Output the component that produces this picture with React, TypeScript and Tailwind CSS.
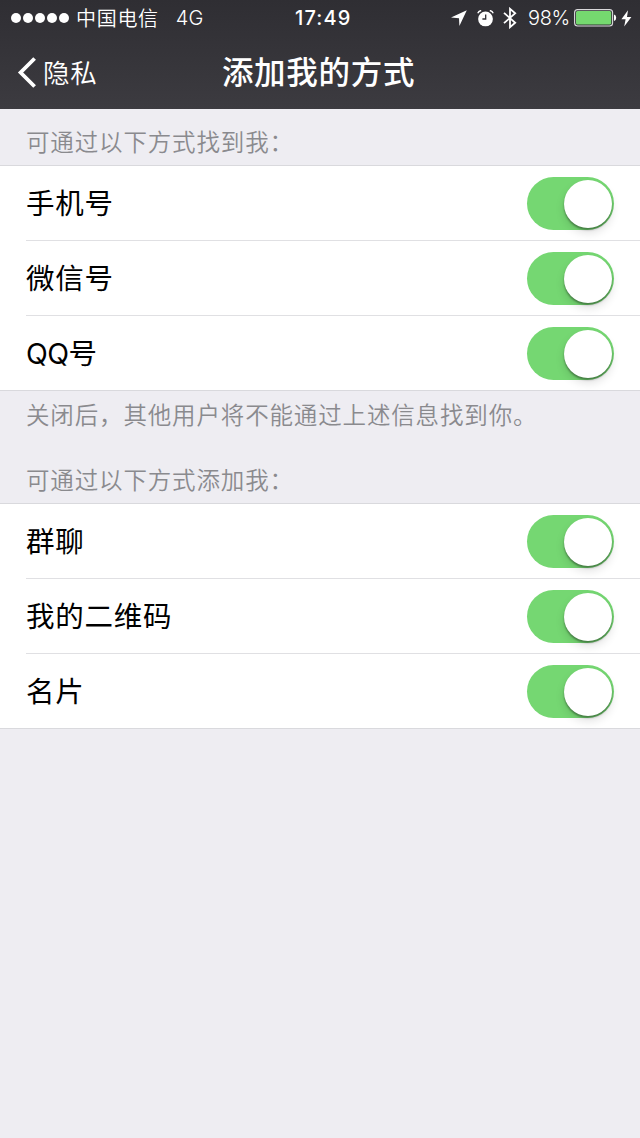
import { useState } from "react";

type Item = { id: string; label: string; latin?: boolean };

const findItems: Item[] = [
  { id: "phone", label: "手机号" },
  { id: "wechat", label: "微信号" },
  { id: "qq", label: "QQ号", latin: true },
];

const addItems: Item[] = [
  { id: "group", label: "群聊" },
  { id: "qrcode", label: "我的二维码" },
  { id: "card", label: "名片" },
];

function SignalDots() {
  return (
    <div className="flex gap-[2px]">
      {Array.from({ length: 5 }).map((_, i) => (
        <span key={i} className="size-[10px] rounded-full bg-white" />
      ))}
    </div>
  );
}

function LocationIcon() {
  return (
    <svg width="16" height="16" viewBox="0 0 16 16" fill="#fff">
      <path d="M15.8 0.3 0 7.6 8 8.2 8.4 16Z" />
    </svg>
  );
}

function AlarmIcon() {
  return (
    <svg width="17" height="17" viewBox="0 0 17 17" fill="none">
      <circle cx="8.5" cy="8.9" r="7.4" fill="#fff" />
      <path d="M0.8 3.2Q1.8 1 4.2 0.5M16.2 3.2Q15.2 1 12.8 0.5" stroke="#fff" strokeWidth="1.4" />
      <path d="M8.7 4.4V9H5.4" stroke="#302f34" strokeWidth="1.3" />
    </svg>
  );
}

function BluetoothIcon() {
  return (
    <svg width="14" height="22" viewBox="0 0 14 22" fill="none" stroke="#fff" strokeWidth="1.8">
      <path d="M1 5.8 12.2 15.8 7 20.2V1.8L12.2 6.2 1 16.2" />
    </svg>
  );
}

function BatteryIcon() {
  return (
    <svg width="43" height="18" viewBox="0 0 43 18" fill="none">
      <rect x="0.6" y="0.6" width="38" height="16.4" rx="3" stroke="#d9d8db" strokeWidth="1.1" />
      <rect x="2" y="2" width="35.2" height="13.6" rx="1.6" fill="#75d96f" />
      <path d="M40 5.6Q42.2 6.2 42.2 8.8T40 12Z" fill="#fff" />
    </svg>
  );
}

function BoltIcon() {
  return (
    <svg width="11" height="17" viewBox="0 0 11 17" fill="#fff">
      <path d="M7 0.2 0.4 9.3H4.6L3.2 16.6 10.4 6.9H6Z" />
    </svg>
  );
}

function StatusBar() {
  return (
    <div className="flex h-9 items-center text-[20px] leading-9">
      <div className="flex w-[295px] items-center pl-[11px]">
        <SignalDots />
        <span className="ml-[7px] pt-px font-[350] tracking-[0.7px]">中国电信</span>
        <span className="ml-[17px] font-[350]">4G</span>
      </div>
      <span className="font-medium tracking-[1.1px]">17:49</span>
      <div className="ml-auto flex items-center pr-[8px]">
        <LocationIcon />
        <span className="ml-[10px]">
          <AlarmIcon />
        </span>
        <span className="ml-[9px]">
          <BluetoothIcon />
        </span>
        <span className="ml-[11px] w-[46px] whitespace-nowrap font-[350] tracking-[-0.4px]">98%</span>
        <BatteryIcon />
        <span className="ml-[4px]">
          <BoltIcon />
        </span>
      </div>
    </div>
  );
}

function NavBar() {
  return (
    <div className="grid h-[73px] grid-cols-[1fr_auto_1fr] items-center pl-[17px] pr-[20px]">
      <button className="flex items-center gap-[7px] text-[26.5px] leading-9 tracking-[0.8px]">
        <svg width="19" height="31" viewBox="0 0 19 31" fill="none" stroke="#fff" strokeWidth="3.8">
          <path d="M17.6 1.5 3.6 15.5 17.6 29.5" />
        </svg>
        <span className="pt-px font-[350]">隐私</span>
      </button>
      <h1 className="text-[31.5px] font-medium leading-9 tracking-[0.7px]">添加我的方式</h1>
    </div>
  );
}

function Switch({ label }: { label: string }) {
  const [on, setOn] = useState(true);
  return (
    <button
      role="switch"
      aria-checked={on}
      aria-label={label}
      onClick={() => setOn(!on)}
      className={`flex h-[53px] w-[87px] items-center rounded-full px-[2px] ${
        on ? "justify-end bg-[#75d772]" : "justify-start bg-[#e5e5ea]"
      }`}
    >
      <span className="size-[48px] rounded-full bg-white shadow-[0_2px_2px_rgba(0,0,0,0.35),0_5px_10px_rgba(0,0,0,0.12)]" />
    </button>
  );
}

function SettingList({ items }: { items: Item[] }) {
  return (
    <ul className="border-y border-[#d9d9dd] bg-white pl-[26px]">
      {items.map((item, i) => (
        <li
          key={item.id}
          className={`flex items-center justify-between pr-[26px] pt-px ${
            i > 0 ? "h-[75px] border-t border-[#e0e0e3]" : "h-[74px]"
          }`}
        >
          <span
            className={`pt-px text-[28.5px] leading-10 ${
              item.latin ? "tracking-[-0.6px]" : "tracking-[0.75px]"
            }`}
          >
            {item.label}
          </span>
          <Switch label={item.label} />
        </li>
      ))}
    </ul>
  );
}

function Caption({ text, className = "" }: { text: string; className?: string }) {
  return (
    <p className={`pl-[26px] text-[23.5px] font-[350] leading-9 tracking-[0.85px] text-[#8a8a8e] ${className}`}>
      {text}
    </p>
  );
}

export default function App() {
  return (
    <div className="min-h-[1138px] w-full bg-[#eeedf2] font-['Inter','Noto_Sans_CJK_SC',sans-serif] text-black">
      <header className="h-[109px] bg-linear-to-b from-[#2f2e33] to-[#3c3b40] text-white">
        <StatusBar />
        <NavBar />
      </header>
      <main>
        <Caption text="可通过以下方式找到我：" className="pb-[4px] pt-[16px]" />
        <SettingList items={findItems} />
        <Caption text="关闭后，其他用户将不能通过上述信息找到你。" className="pt-[7px]" />
        <Caption text="可通过以下方式添加我：" className="pb-[4px] pt-[29px]" />
        <SettingList items={addItems} />
      </main>
    </div>
  );
}
